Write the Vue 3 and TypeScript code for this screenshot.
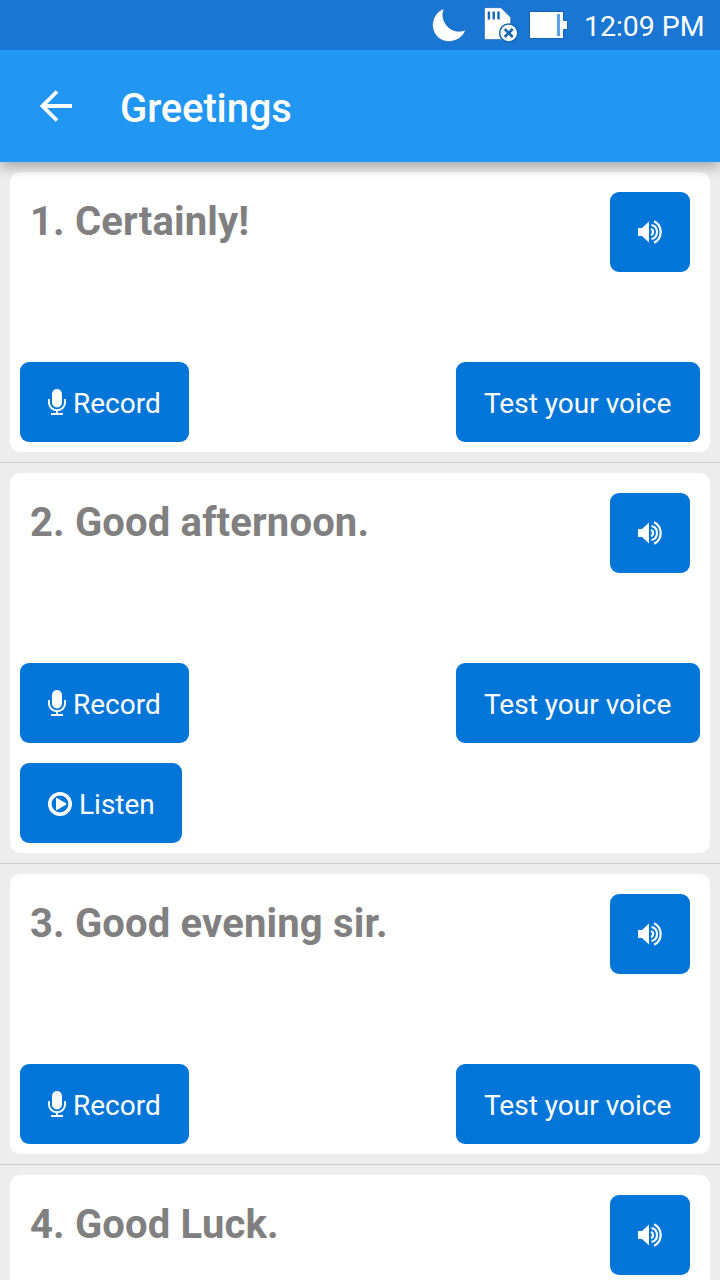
<script setup lang="ts">
interface Phrase {
  id: number
  text: string
  recorded: boolean
  expanded: boolean
}

const phrases: Phrase[] = [
  { id: 1, text: 'Certainly!', recorded: false, expanded: true },
  { id: 2, text: 'Good afternoon.', recorded: true, expanded: true },
  { id: 3, text: 'Good evening sir.', recorded: false, expanded: true },
  { id: 4, text: 'Good Luck.', recorded: false, expanded: false },
]
</script>

<template>
  <div class="screen">
    <div class="status">
      <svg class="moon" width="36" height="36" viewBox="0 0 36 36">
        <path d="M13 1.500C-2 7.500-2 28 12 33.500C22 37 32 31 34.700 23C27 26 19 23.500 15 17.500C11.500 12.500 11 7 13 1.500Z" fill="#fff" stroke="#1663b4" stroke-width=".6" />
      </svg>
      <svg class="sd" width="36" height="36" viewBox="0 0 36 36">
        <path d="M1.500 .7H18L27.700 10.500V32.500H1.500Z" fill="#fff" stroke="#1663b4" stroke-width=".6" />
        <path d="M5.900 4.500V12.500M10.700 4.500V12.500M15.500 4.500V12.500" stroke="#1465b8" stroke-width="2.400" />
        <circle cx="25.700" cy="26" r="9.800" fill="#1465b8" />
        <circle cx="25.700" cy="26" r="8.300" fill="#fff" />
        <path d="M21.700 22L29.700 30M29.700 22L21.700 30" stroke="#1465b8" stroke-width="2.600" />
      </svg>
      <svg class="battery" width="40" height="30" viewBox="0 0 40 30">
        <path d="M1.500 1.500H35.500V10.500H39.500V19.500H35.500V28.500H1.500Z" fill="#fff" stroke="#1663b4" stroke-width="1" />
        <path d="M29 4H32V26H29Z" fill="#5c9fe2" />
      </svg>
      <span class="time">12:09 PM</span>
    </div>
    <header class="bar">
      <svg class="back" width="32" height="32" viewBox="0 0 32 32">
        <path d="M32 16H4M17 1.500L2.500 16L17 30.500" fill="none" stroke="#fff" stroke-width="3.800" />
      </svg>
      <h1>Greetings</h1>
    </header>
    <main>
      <div v-for="p in phrases" :key="p.id" class="item">
        <section class="card">
          <div class="top">
            <h2>{{ p.id }}. {{ p.text }}</h2>
            <button class="btn speak" aria-label="Play phrase">
              <svg width="26" height="24" viewBox="0 0 26 24">
                <path d="M1 8H5L12 1.500V22.500L5 16H1Z" fill="#fff" />
                <path d="M14 9A3.200 3.200 0 0 1 14 15M14.500 5A7.200 7.200 0 0 1 14.500 19M17.100 1.300A12 12 0 0 1 17.100 22.700" fill="none" stroke="#fff" stroke-width="2.200" />
              </svg>
            </button>
          </div>
          <div v-if="p.expanded" class="actions">
            <button class="btn record">
              <svg width="18" height="26" viewBox="0 0 18 26">
                <rect x="4" y="0" width="10" height="18.500" rx="5" fill="#fff" />
                <path d="M.9 10V13C.9 18 4.500 21.200 9 21.200S17.100 18 17.100 13V10M9 21V25M3 25H15" fill="none" stroke="#fff" stroke-width="1.900" />
              </svg>
              <span>Record</span>
            </button>
            <button class="btn test"><span>Test your voice</span></button>
          </div>
          <div v-if="p.recorded" class="playback">
            <button class="btn listen">
              <svg width="24" height="24" viewBox="0 0 24 24">
                <circle cx="12" cy="12" r="10.200" fill="none" stroke="#fff" stroke-width="3.600" />
                <path d="M8 6.300Q8 5.400 8.900 5.900L18 11.200Q19 12 18 12.800L8.900 18.100Q8 18.600 8 17.700Z" fill="#fff" />
              </svg>
              <span>Listen</span>
            </button>
          </div>
        </section>
      </div>
    </main>
  </div>
</template>

<style>
body { margin: 0; overflow: hidden; }
</style>

<style scoped>
* { box-sizing: border-box; }
.screen {
  width: 720px;
  height: 1280px;
  overflow: hidden;
  display: flex;
  flex-direction: column;
  background: #ededed;
  font-family: Roboto, "Noto Sans", sans-serif;
}
.status {
  position: relative;
  z-index: 2;
  height: 50px;
  flex: none;
  display: flex;
  align-items: flex-start;
  background: #1976d2;
  color: #fff;
}
.moon { margin: 7px 0 0 431px; }
.sd { margin: 7px 0 0 16px; }
.battery { margin: 10px 0 0 9px; }
.time {
  margin: 10px 0 0 16px;
  font-size: 28.5px;
  line-height: 34px;
  letter-spacing: -.05px;
  white-space: nowrap;
}
.bar {
  position: relative;
  z-index: 1;
  height: 112px;
  flex: none;
  display: flex;
  align-items: center;
  padding-left: 40px;
  background: #2196f3;
  color: #fff;
  box-shadow: 0 5px 13px rgba(0, 0, 0, .3);
}
h1 {
  margin: 6px 0 0 48px;
  font-size: 40px;
  line-height: 48px;
  font-weight: 500;
  letter-spacing: -.12px;
}
main { flex: none; }
.item {
  padding: 10px;
  border-bottom: 1px solid #cecece;
}
.card {
  min-height: 280px;
  padding: 20px 10px 10px;
  border-radius: 10px;
  background: #fff;
}
.top {
  height: 170px;
  padding: 0 10px;
  display: flex;
  justify-content: space-between;
  align-items: flex-start;
}
h2 {
  margin: 6px 0 0;
  font-size: 40px;
  line-height: 48px;
  font-weight: 700;
  letter-spacing: .15px;
  color: #808080;
}
.btn {
  height: 80px;
  padding: 0 28px;
  display: flex;
  align-items: center;
  border: 0;
  border-radius: 9px;
  background: #0275d8;
  color: #fff;
  font: 400 28px/34px Roboto, "Noto Sans", sans-serif;
  white-space: nowrap;
}
.btn span { margin-top: 3px; }
.speak { width: 80px; padding: 0 27px; }
.actions { display: flex; justify-content: space-between; }
.record { width: 169px; gap: 7px; }
.test { width: 244px; }
.playback { margin-top: 20px; }
.listen { width: 162px; gap: 7px; }
.listen svg { margin-top: 1px; }
.btn svg, .status svg, .bar svg { display: block; flex: none; }
</style>
